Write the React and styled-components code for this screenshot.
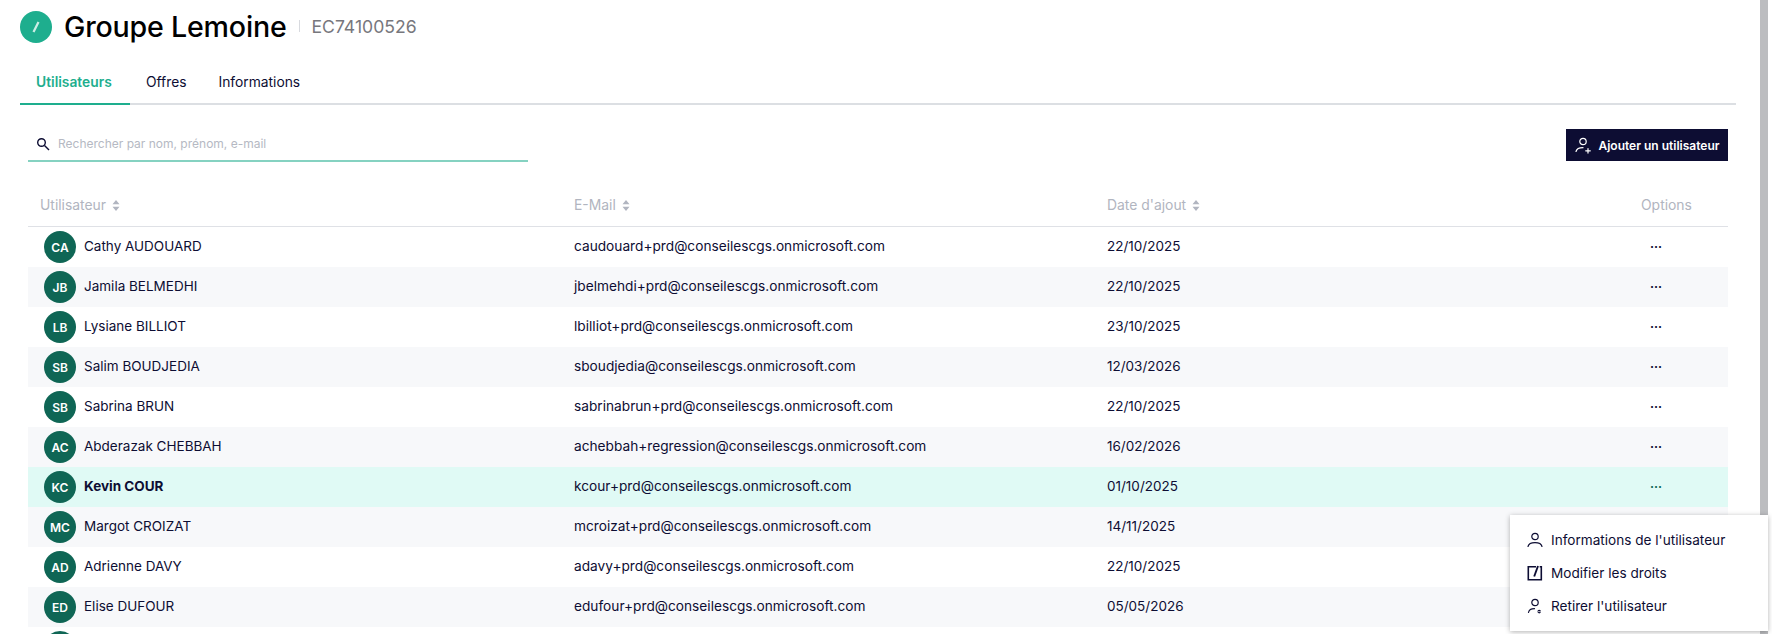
import React from 'react';
import styled, { createGlobalStyle } from 'styled-components';

const Global = createGlobalStyle`
  html, body { margin: 0; padding: 0; height: 634px; overflow: hidden; background: #fff; }
  body { font-family: "Inter", "Liberation Sans", sans-serif; color: #0d0d33; }
`;
const Page = styled.div`display: flex; height: 634px; overflow: hidden; position: relative;`;
const Main = styled.main`width: 1736px; padding: 0 0 0 20px; flex: none; box-sizing: border-box;`;
const ScrollTrack = styled.div`margin-left: 24px; width: 8px; height: 634px; background: #bcbdc0; flex: none;`;
const Header = styled.header`display: flex; align-items: center; height: 54px;`;
const LogoBadge = styled.div`width: 32px; height: 32px; border-radius: 50%; background: #1eae8e; display: flex; align-items: center; justify-content: center;`;
const Title = styled.h1`margin: 0 0 2px 12px; font-size: 28.6px; font-weight: 500; color: #000; letter-spacing: -0.2px;`;
const Sep = styled.span`width: 1px; height: 12px; background: #d8dadf; margin: 0 12px 2px;`;
const Code = styled.span`font-size: 17.6px; color: #77777d; padding-bottom: 2px;`;
const Tabs = styled.nav`display: flex; margin-top: 12px; height: 37px; border-bottom: 2px solid #dcdfe3;`;
const Tab = styled.div`
  padding: 8px 16px 0; font-size: 13.8px; box-sizing: border-box;
  font-weight: ${p => (p.$active ? 600 : 400)};
  color: ${p => (p.$active ? '#1eae8e' : '#0d0d33')};
  border-bottom: 2px solid ${p => (p.$active ? '#1eae8e' : 'transparent')};
  height: 39px;
  min-width: ${p => (p.$active ? '110px' : 'auto')};
`;
const Toolbar = styled.div`display: flex; justify-content: space-between; align-items: flex-start; padding: 24px 8px 0; height: 95px; box-sizing: border-box;`;
const Search = styled.div`width: 500px; height: 33px; box-sizing: border-box; border-bottom: 2px solid #85d2c1; display: flex; align-items: center; gap: 8px; padding: 0 0 2px 8px;`;
const SearchText = styled.span`font-size: 12px; color: #b5b9c3;`;
const AddButton = styled.button`width: 162px; height: 32px; border: 0; background: #0d0d33; color: #fff; display: flex; align-items: center; justify-content: center; gap: 6px; font: 600 12px "Inter", sans-serif; padding: 0;`;
const Table = styled.div`margin: 0 8px; width: 1700px;`;
const HeadRow = styled.div`display: grid; grid-template-columns: 534px 533px 534px 99px; height: 24px; padding-bottom: 9px; margin-top: -7px; border-bottom: 1px solid #dfe1e6;`;
const HeadCell = styled.div`display: flex; align-items: center; gap: 6px; padding-left: 12px; font-size: 13.9px; color: #b1b5c0;`;
const Row = styled.div`
  display: grid; grid-template-columns: 534px 533px 534px 99px; height: 40px; align-items: center;
  background: ${p => (p.$current ? '#e0faf5' : p.$odd ? '#f7f8fa' : '#fff')};
`;
const UserCell = styled.div`display: flex; align-items: center; padding-left: 16px; gap: 8px; font-size: 13.5px; font-weight: ${p => (p.$current ? 700 : 400)};`;
const NameText = styled.span`padding-bottom: 2px;`;
const Avatar = styled.div`width: 32px; height: 32px; border-radius: 50%; background: #0f6655; color: #fff; font-size: 12px; font-weight: 600; display: flex; align-items: center; justify-content: center; flex: none;`;
const Cell = styled.div`padding: 0 0 2px 12px; font-size: 13.5px;`;
const MailCell = styled(Cell)`font-size: 13.7px;`;
const Dots = styled.div`padding-left: 21px; font-size: 12px; font-weight: 700; line-height: 8px; height: 14px; color: ${p => (p.$current ? '#0f6655' : '#0d0d33')};`;
const Menu = styled.div`position: absolute; left: 1510px; top: 515px; width: 258px; height: 116px; background: #fff; box-shadow: 0 1px 5px rgba(0,0,0,.3); padding-top: 8px; box-sizing: border-box;`;
const MenuItem = styled.div`display: flex; align-items: center; height: 33px; padding-left: 16px; gap: 7px; font-size: 13.6px; color: #0d0d33;`;

const Sort = () => (
  <svg width="8" height="11" viewBox="0 0 8 11" fill="#b1b5c0"><path d="M4 0l3.5 4.2h-7zM4 11L.5 6.8h7z" /></svg>
);
const UserIcon = ({ children, color = '#0d0d33' }) => (
  <svg width="18" height="18" viewBox="0 0 18 18" fill="none" stroke={color} strokeWidth="1.2" strokeLinecap="round">
    <circle cx="9" cy="5.5" r="3.2" />
    {children}
  </svg>
);

const rows = [
  ['CA', 'Cathy AUDOUARD', 'caudouard+prd@conseilescgs.onmicrosoft.com', '22/10/2025'],
  ['JB', 'Jamila BELMEDHI', 'jbelmehdi+prd@conseilescgs.onmicrosoft.com', '22/10/2025'],
  ['LB', 'Lysiane BILLIOT', 'lbilliot+prd@conseilescgs.onmicrosoft.com', '23/10/2025'],
  ['SB', 'Salim BOUDJEDIA', 'sboudjedia@conseilescgs.onmicrosoft.com', '12/03/2026'],
  ['SB', 'Sabrina BRUN', 'sabrinabrun+prd@conseilescgs.onmicrosoft.com', '22/10/2025'],
  ['AC', 'Abderazak CHEBBAH', 'achebbah+regression@conseilescgs.onmicrosoft.com', '16/02/2026'],
  ['KC', 'Kevin COUR', 'kcour+prd@conseilescgs.onmicrosoft.com', '01/10/2025'],
  ['MC', 'Margot CROIZAT', 'mcroizat+prd@conseilescgs.onmicrosoft.com', '14/11/2025'],
  ['AD', 'Adrienne DAVY', 'adavy+prd@conseilescgs.onmicrosoft.com', '22/10/2025'],
  ['ED', 'Elise DUFOUR', 'edufour+prd@conseilescgs.onmicrosoft.com', '05/05/2026'],
];

export default function App() {
  return (
    <Page>
      <Global />
      <Main>
        <Header>
          <LogoBadge>
            <svg width="14" height="16" viewBox="0 0 14 16"><path d="M4.5 13L9.5 3" stroke="#cdeee6" strokeWidth="2.2" /></svg>
          </LogoBadge>
          <Title>Groupe Lemoine</Title>
          <Sep />
          <Code>EC74100526</Code>
        </Header>
        <Tabs>
          <Tab $active>Utilisateurs</Tab>
          <Tab>Offres</Tab>
          <Tab>Informations</Tab>
        </Tabs>
        <Toolbar>
          <Search>
            <svg width="14" height="14" viewBox="0 0 14 14" fill="none" stroke="#0d0d33" strokeWidth="1.4"><circle cx="5.5" cy="5.5" r="3.8" /><path d="M8.5 8.5L13 13" /></svg>
            <SearchText>Rechercher par nom, prénom, e-mail</SearchText>
          </Search>
          <AddButton>
            <UserIcon color="#fff"><path d="M2 15.5c.6-2.6 3-3.8 7-3.8M14 12.5v4.6M11.7 14.8h4.6" /></UserIcon>
            Ajouter un utilisateur
          </AddButton>
        </Toolbar>
        <Table>
          <HeadRow>
            <HeadCell>Utilisateur <Sort /></HeadCell>
            <HeadCell>E-Mail <Sort /></HeadCell>
            <HeadCell>Date d'ajout <Sort /></HeadCell>
            <HeadCell>Options</HeadCell>
          </HeadRow>
          {rows.map(([ini, name, mail, date], i) => (
            <Row key={mail} $odd={i % 2 === 1 || i === 7} $current={i === 6}>
              <UserCell $current={i === 6}><Avatar>{ini}</Avatar><NameText>{name}</NameText></UserCell>
              <MailCell>{mail}</MailCell>
              <Cell>{date}</Cell>
              <Dots $current={i === 6}>...</Dots>
            </Row>
          ))}
          <Row><UserCell><Avatar /></UserCell></Row>
        </Table>
      </Main>
      <ScrollTrack />
      <Menu>
        <MenuItem>
          <UserIcon><path d="M2 15.5c.6-2.6 3.2-3.8 7-3.8s6.4 1.2 7 3.8" /></UserIcon>
          Informations de l'utilisateur
        </MenuItem>
        <MenuItem>
          <svg width="18" height="18" viewBox="0 0 18 18" fill="none" stroke="#0d0d33" strokeWidth="1.6"><path d="M10 2.8H2.3v12.9h13V2.8h-1.6" /><path d="M8.2 12.5L12 2" strokeWidth="1.9" /></svg>
          Modifier les droits
        </MenuItem>
        <MenuItem>
          <UserIcon><path d="M2.5 15.5c.5-2.6 2.8-3.8 6-3.8" /><circle cx="13.2" cy="14.6" r="1.8" fill="#0d0d33" stroke="none" /><path d="M11.8 14.6h2.8" stroke="#fff" strokeWidth=".7" /></UserIcon>
          Retirer l'utilisateur
        </MenuItem>
      </Menu>
    </Page>
  );
}
